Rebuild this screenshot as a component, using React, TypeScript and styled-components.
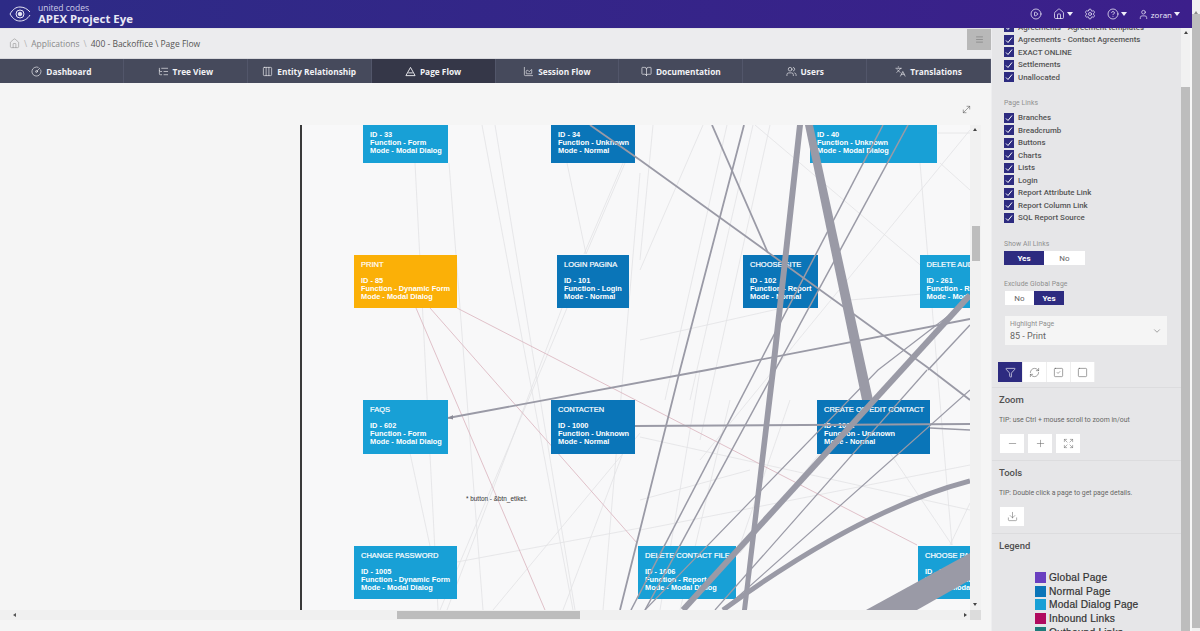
import React from "react";
import styled, { createGlobalStyle } from "styled-components";
import {
  AreaChart, BookOpen, ChevronDown, CircleGauge, CircleHelp, CirclePlay, Columns3, Download, Expand, Filter,
  Home, Languages, ListTree, Menu, Minus, MoveDiagonal, Plus, RefreshCw, Settings, Square, SquareCheck,
  User, Users,
} from "lucide-react";

const GlobalStyle = createGlobalStyle`
  html, body { margin: 0; padding: 0; height: 631px; overflow: hidden; background: #f5f5f5; }
  * { box-sizing: border-box; }
  body { font-family: "Open Sans", "Noto Sans", sans-serif; }
`;

const Page = styled.div`
  display: flex;
  width: 1200px;
  height: 631px;
  overflow: hidden;
`;

const Content = styled.div`
  display: flex;
  flex-direction: column;
  width: 1192px;
`;

const PageScrollbar = styled.div`
  width: 8px;
  display: flex;
  flex-direction: column;
  background: #f1f1f1;
  align-items: center;
  &::before {
    content: "";
    margin-top: 2px;
    height: 6px;
    border-left: 2.5px solid transparent;
    border-right: 2.5px solid transparent;
    border-bottom: 3px solid #8a8a8a;
    border-top: 3px solid transparent;
  }
  &::after {
    content: "";
    width: 100%;
    height: 614px;
    background: #bdbdbd;
  }
`;

const Header = styled.header`
  height: 28px;
  flex: none;
  display: flex;
  align-items: center;
  background: linear-gradient(90deg, #2d2b86, #3c1f8b);
  color: #fff;
  padding: 0 12px 0 9px;
`;

const Brand = styled.div`
  display: flex;
  flex-direction: column;
  margin-left: 7px;
  flex: 1;
`;

const BrandTop = styled.span`
  font-size: 8.5px;
  line-height: 9px;
  color: #cfcde8;
  margin-top: -1px;
`;

const BrandName = styled.span`
  font-size: 11.4px;
  line-height: 13px;
  font-weight: 700;
  color: #e9e8f5;
`;

const HeadActions = styled.div`
  display: flex;
  align-items: center;
  gap: 11px;
`;

const HeadAction = styled.span`
  display: flex;
  align-items: center;
  gap: 2px;
  font-size: 8px;
  color: #f0effa;
`;

const Caret = styled.i`
  width: 0;
  height: 0;
  border-left: 3px solid transparent;
  border-right: 3px solid transparent;
  border-top: 4px solid #f0effa;
`;

const Body = styled.div`
  display: flex;
  flex: 1;
  min-height: 0;
`;

const Main = styled.main`
  width: 991px;
  display: flex;
  flex-direction: column;
`;

const Crumbs = styled.div`
  height: 30px;
  flex: none;
  display: flex;
  align-items: center;
  background: #ececee;
  border-top: 1px solid #e4e4e6;
  padding-left: 9px;
  font-size: 8.5px;
  position: relative;
  color: #8a8a8a;
`;

const CrumbSep = styled.span`
  margin: 0 4px;
  color: #b5b5b5;
`;

const CrumbCurrent = styled.span`
  color: #555;
`;

const PanelToggle = styled.div`
  position: absolute;
  right: 0;
  top: 0;
  width: 24px;
  height: 21px;
  display: flex;
  align-items: center;
  justify-content: center;
  background: #b8b8b8;
  color: #8c8c8c;
`;

const Tabs = styled.nav`
  height: 25px;
  flex: none;
  display: grid;
  grid-template-columns: repeat(8, 1fr);
  background: #464a5c;
  border-top: 1px solid #d8d8dc;
`;

const Tab = styled.div<{ $active?: boolean }>`
  display: flex;
  align-items: center;
  justify-content: center;
  gap: 4px;
  color: #f2f2f5;
  font-size: 8.3px;
  font-weight: 700;
  background: ${(p) => (p.$active ? "#353748" : "transparent")};
  border-right: 1px solid #52566a;
`;

const Stage = styled.section`
  flex: 1;
  display: flex;
  flex-direction: column;
  position: relative;
  padding-top: 42px;
  background: #f5f5f5;
`;

const ExpandBtn = styled.span`
  position: absolute;
  left: 961px;
  top: 21px;
  color: #555;
  display: flex;
`;

const CanvasRow = styled.div`
  display: flex;
  height: 485px;
  padding-left: 300px;
`;

const Canvas = styled.div`
  position: relative;
  width: 670px;
  height: 485px;
  overflow: hidden;
  background: #f8f8f9;
  border-left: 2px solid #3a3a3a;
`;

const EdgeLayer = styled.svg`
  position: absolute;
  left: -2px;
  top: 0;
  width: 670px;
  height: 485px;
`;

const Node = styled.div<{ $x: number; $y: number; $w: number; $kind: "modal" | "normal" | "active" }>`
  position: absolute;
  left: ${(p) => p.$x - 302}px;
  top: ${(p) => p.$y - 125}px;
  width: ${(p) => p.$w}px;
  height: 53.5px;
  padding: 6px 0 0 7px;
  color: #fff;
  font-family: "Liberation Sans", Arial, sans-serif;
  font-weight: 700;
  font-size: 7.4px;
  line-height: 8px;
  white-space: nowrap;
  background: ${(p) => (p.$kind === "modal" ? "#18a0d6" : p.$kind === "normal" ? "#0a75b8" : "#fbb007")};
`;

const NodeTitle = styled.div`
  height: 8.5px;
  margin-bottom: 7.5px;
  font-size: 7.5px;
  font-weight: 400;
  -webkit-text-stroke: 0.2px #fff;
`;

const EdgeLabel = styled.span`
  position: absolute;
  left: 164px;
  top: 370px;
  font-family: "Liberation Sans", Arial, sans-serif;
  font-size: 6.4px;
  line-height: 8px;
  color: #333;
`;

const VBar = styled.div`
  width: 11px;
  position: relative;
  background: #f1f1f1;
`;

const VThumb = styled.div`
  position: absolute;
  left: 2px;
  top: 101px;
  width: 8px;
  height: 35px;
  background: #bdbdbd;
`;

const ArrowUp = styled.i`
  position: absolute;
  left: 3px;
  top: 3px;
  border-left: 2.5px solid transparent;
  border-right: 2.5px solid transparent;
  border-bottom: 3px solid #444;
`;

const ArrowDown = styled.i`
  position: absolute;
  left: 3px;
  bottom: 4px;
  border-left: 2.5px solid transparent;
  border-right: 2.5px solid transparent;
  border-top: 3px solid #444;
`;

const HBar = styled.div`
  height: 10px;
  width: 981px;
  position: relative;
  background: #f0f0f0;
`;

const HThumb = styled.div`
  position: absolute;
  left: 397px;
  top: 1px;
  width: 183px;
  height: 8px;
  background: #bdbdbd;
`;

const ArrowLeft = styled.i`
  position: absolute;
  left: 13px;
  top: 2.5px;
  border-top: 2.5px solid transparent;
  border-bottom: 2.5px solid transparent;
  border-right: 3px solid #555;
`;

const ArrowRight = styled.i`
  position: absolute;
  left: 964px;
  top: 2.5px;
  border-top: 2.5px solid transparent;
  border-bottom: 2.5px solid transparent;
  border-left: 3px solid #444;
`;

const HCorner = styled.div`
  position: absolute;
  left: 970px;
  top: 0;
  width: 11px;
  height: 10px;
  background: #dcdcdc;
`;

const Aside = styled.aside`
  width: 201px;
  display: flex;
  height: 603px;
  overflow: hidden;
`;

const SidePanel = styled.div`
  width: 190px;
  background: #e6e6e8;
  border-left: 1px solid #eeeef0;
  color: #505050;
  overflow: hidden;
  font-family: Roboto, "Open Sans", sans-serif;
`;

const SideBar = styled.div`
  width: 9px;
  display: flex;
  flex-direction: column;
  background: #f1f1f1;
  position: relative;
  padding-top: 59px;
  &::after {
    content: "";
    flex: 1;
    background: #bdbdbd;
  }
`;

const SideGap = styled.div`
  width: 2px;
  background: #f7f7f7;
`;

const FilterGroup = styled.div`
  padding: 0 12px;
  margin-top: -1px;
`;

const CheckList = styled.div<{ $first?: boolean }>`
  display: flex;
  flex-direction: column;
  margin-top: ${(p) => (p.$first ? "-7px" : "0")};
`;

const CheckRow = styled.label`
  display: flex;
  align-items: center;
  gap: 4px;
  height: 12.5px;
  font-size: 7.9px;
  font-weight: 500;
  color: #555;
  white-space: nowrap;
`;

const Box = styled.span`
  width: 10px;
  height: 10px;
  background: #2d2b80;
  color: #fff;
  display: flex;
  align-items: center;
  justify-content: center;
  flex: none;
`;

const GroupLabel = styled.div<{ $top: number; $bottom: number }>`
  font-size: 6.8px;
  line-height: 10px;
  letter-spacing: 0.1px;
  color: #8e8e8e;
  margin: ${(p) => p.$top}px 0 ${(p) => p.$bottom}px;
`;

const Toggle = styled.div<{ $bottom: number; $indent?: number }>`
  display: inline-flex;
  margin-left: ${(p) => p.$indent ?? 0}px;
  margin-bottom: ${(p) => p.$bottom}px;
  height: 14px;
  vertical-align: top;
`;

const ToggleItem = styled.span<{ $on?: boolean; $w: number }>`
  width: ${(p) => p.$w}px;
  display: flex;
  align-items: center;
  justify-content: center;
  font-size: 8px;
  font-weight: ${(p) => (p.$on ? 700 : 400)};
  background: ${(p) => (p.$on ? "#2d2b80" : "#fff")};
  color: ${(p) => (p.$on ? "#fff" : "#666")};
`;

const SelectBox = styled.div`
  margin-left: 1px;
  width: 162px;
  height: 29px;
  background: #f5f5f5;
  padding: 3px 5px;
  position: relative;
  color: #666;
`;

const SelectLabel = styled.div`
  font-size: 6.8px;
  line-height: 10px;
  color: #8e8e8e;
`;

const SelectValue = styled.div`
  font-size: 9px;
  line-height: 14px;
`;

const SelectArrow = styled.span`
  position: absolute;
  right: 5px;
  top: 10px;
  display: flex;
`;

const ToolGroup = styled.div`
  display: flex;
  margin: 17px 0 5px 6px;
  width: 97px;
  height: 20px;
`;

const ToolItem = styled.span<{ $on?: boolean }>`
  flex: ${(p) => (p.$on ? "0 0 25px" : "1")};
  display: flex;
  align-items: center;
  justify-content: center;
  background: ${(p) => (p.$on ? "#2d2b80" : "#fff")};
  color: ${(p) => (p.$on ? "#fff" : "#555")};
  border-right: 1px solid #eee;
`;

const Section = styled.section`
  border-top: 1px solid #dcdcde;
  padding: 6px 8px 0 7px;
`;

const SectionTitle = styled.h4`
  margin: 0;
  font-size: 9.5px;
  line-height: 12px;
  font-weight: 500;
  color: #505050;
`;

const Tip = styled.p`
  margin: 9px 0 9px;
  font-size: 6.9px;
  line-height: 10px;
  color: #666;
  white-space: nowrap;
`;

const IconRow = styled.div`
  display: flex;
  gap: 4px;
  margin-bottom: 7px;
  margin-left: 1px;
`;

const IconBtn = styled.span`
  width: 24px;
  height: 19px;
  background: #fff;
  color: #666;
  display: flex;
  align-items: center;
  justify-content: center;
`;

const Legend = styled.ul`
  list-style: none;
  margin: 18.500px 0 0;
  padding: 0 0 0 36px;
`;

const LegendItem = styled.li`
  display: flex;
  align-items: center;
  gap: 3px;
  height: 13.8px;
  font-family: "Liberation Sans", Arial, sans-serif;
  font-size: 10.2px;
  letter-spacing: 0.2px;
  -webkit-text-stroke: 0.2px #333;
  color: #333;
  white-space: nowrap;
`;

const Swatch = styled.i<{ $color: string }>`
  width: 11px;
  height: 11px;
  background: ${(p) => p.$color};
  flex: none;
`;

function PageFlowIcon({ size }: { size: number; strokeWidth?: number }) {
  return (
    <svg width={size} height={size} viewBox="0 0 12 12" fill="none" stroke="currentColor" strokeWidth="1">
      <path d="M6 1.500L11 10.500H1z" />
      <path d="M3.500 7.500h5" />
    </svg>
  );
}

const TABS = [
  { label: "Dashboard", icon: CircleGauge },
  { label: "Tree View", icon: ListTree },
  { label: "Entity Relationship", icon: Columns3 },
  { label: "Page Flow", icon: PageFlowIcon, active: true },
  { label: "Session Flow", icon: AreaChart },
  { label: "Documentation", icon: BookOpen },
  { label: "Users", icon: Users },
  { label: "Translations", icon: Languages },
];

type NodeData = {
  x: number; y: number; w: number; kind: "modal" | "normal" | "active";
  title?: string; id: string; fn: string; mode: string;
};

const NODES: NodeData[] = [
  { x: 363, y: 109, w: 85, kind: "modal", id: "33", fn: "Form", mode: "Modal Dialog" },
  { x: 551, y: 109, w: 84, kind: "normal", id: "34", fn: "Unknown", mode: "Normal" },
  { x: 810, y: 109, w: 127, kind: "modal", id: "40", fn: "Unknown", mode: "Modal Dialog" },
  { x: 354, y: 254.5, w: 103, kind: "active", title: "PRINT", id: "85", fn: "Dynamic Form", mode: "Modal Dialog" },
  { x: 557, y: 254.5, w: 72, kind: "normal", title: "LOGIN PAGINA", id: "101", fn: "Login", mode: "Normal" },
  { x: 743, y: 254.5, w: 75, kind: "normal", title: "CHOOSE SITE", id: "102", fn: "Report", mode: "Normal" },
  { x: 919.5, y: 254.5, w: 90, kind: "modal", title: "DELETE AUDIT", id: "261", fn: "Report", mode: "Modal Dialog" },
  { x: 363, y: 400, w: 85, kind: "modal", title: "FAQS", id: "602", fn: "Form", mode: "Modal Dialog" },
  { x: 551, y: 400, w: 84, kind: "normal", title: "CONTACTEN", id: "1000", fn: "Unknown", mode: "Normal" },
  { x: 817, y: 400, w: 113, kind: "normal", title: "CREATE OR EDIT CONTACT", id: "1001", fn: "Unknown", mode: "Normal" },
  { x: 354, y: 545.5, w: 103, kind: "modal", title: "CHANGE PASSWORD", id: "1005", fn: "Dynamic Form", mode: "Modal Dialog" },
  { x: 638, y: 545.5, w: 98, kind: "modal", title: "DELETE CONTACT FILE", id: "1006", fn: "Report", mode: "Modal Dialog" },
  { x: 918, y: 545.5, w: 90, kind: "modal", title: "CHOOSE PAGE", id: "1007", fn: "Report", mode: "Modal Dialog" },
];

// x1 y1 x2 y2, page coordinates
const LIGHT = [
  [415, 163, 438, 610], [449, 163, 483, 610], [482, 125, 573, 610], [495, 125, 575, 610],
  [567, 163, 586, 254], [625, 163, 586, 254], [623, 163, 584, 254], [640, 173, 603, 610],
  [567, 308, 440, 610], [562, 308, 447, 610], [410, 453, 430, 546], [640, 528, 457, 562],
  [640, 433, 493, 610], [623, 453, 563, 610], [653, 125, 640, 260], [703, 125, 640, 270],
  [727, 125, 665, 400], [753, 125, 690, 400], [770, 125, 700, 440], [755, 125, 970, 307],
  [970, 130, 700, 460], [920, 163, 952, 545], [940, 163, 970, 190], [938, 133, 970, 133],
  [640, 437, 970, 510], [640, 530, 970, 465], [890, 453, 952, 545], [970, 503, 950, 545],
  [740, 553, 820, 453], [700, 370, 660, 610], [730, 400, 680, 610], [790, 400, 740, 545],
  [850, 300, 970, 290], [640, 340, 818, 300], [640, 500, 750, 470],
];

const PINK = [
  [416, 308, 545, 610], [430, 308, 637, 543], [457, 308, 917, 545],
];

const HEAVY: { d: string; w: number }[] = [
  { d: "M590 125L640 160L927 367L970 400", w: 1.8 },
  { d: "M712 125L768 253", w: 1.8 },
  { d: "M744 125L680 370L620 610", w: 1.8 },
  { d: "M908 125L645 610", w: 1.5 },
  { d: "M883 125L631 610", w: 1.5 },
  { d: "M448 418L707 370L970 319", w: 1.8 },
  { d: "M635 426L970 424", w: 2 },
  { d: "M930 428L970 430", w: 1.5 },
  { d: "M927 370L715 610", w: 1.2 },
  { d: "M970 390L723 610", w: 1.2 },
  { d: "M960 307L878 370L645 610", w: 1.2 },
  { d: "M970 325L928 370", w: 1.5 },
  { d: "M970 295L683 610", w: 6 },
  { d: "M970 481Q860 510 723 610", w: 5 },
];

const BANDS = [
  "M805 125L813 125L873 400L862 400Z",
  "M797 125L803 125L776 370L747 610L742 610L770 370Z",
  "M970 553L970 580L917 610L866 610Z",
];

function EyeLogo() {
  return (
    <svg width="22" height="16" viewBox="0 0 22 16" fill="none" stroke="#e8e7f5" strokeWidth="1">
      <path d="M1 8C4 3 7 1 11 1s7.500 2 10 5M21 9c-2.500 4-6 6-10 6S4 13 1 8" />
      <circle cx="11" cy="8" r="4" />
      <circle cx="11" cy="8" r="1.800" fill="#e8e7f5" />
    </svg>
  );
}

function Check() {
  return (
    <svg width="8" height="8" viewBox="0 0 8 8" fill="none" stroke="#fff" strokeWidth="1">
      <path d="M1 4.500L3 6.500L7 1.500" />
    </svg>
  );
}

const CHECKS_TOP = ["Agreements - Agreement templates", "Agreements - Contact Agreements", "EXACT ONLINE", "Settlements", "Unallocated"];
const CHECKS_LINKS = ["Branches", "Breadcrumb", "Buttons", "Charts", "Lists", "Login", "Report Attribute Link", "Report Column Link", "SQL Report Source"];
const LEGEND = [
  { label: "Global Page", color: "#6a3fc0" },
  { label: "Normal Page", color: "#0a75b8" },
  { label: "Modal Dialog Page", color: "#18a0d6" },
  { label: "Inbound Links", color: "#b00a5e" },
  { label: "Outbound Links", color: "#1f7a7a" },
];

export default function App() {
  return (
    <Page>
      <GlobalStyle />
      <Content>
        <Header>
          <EyeLogo />
          <Brand>
            <BrandTop>united codes</BrandTop>
            <BrandName>APEX Project Eye</BrandName>
          </Brand>
          <HeadActions>
            <HeadAction><CirclePlay size={12} strokeWidth={1.5} /></HeadAction>
            <HeadAction><Home size={12} strokeWidth={1.5} /><Caret /></HeadAction>
            <HeadAction><Settings size={12} strokeWidth={1.5} /></HeadAction>
            <HeadAction><CircleHelp size={12} strokeWidth={1.5} /><Caret /></HeadAction>
            <HeadAction><User size={11} strokeWidth={1.5} /> zoran <Caret /></HeadAction>
          </HeadActions>
        </Header>
        <Body>
          <Main>
            <Crumbs>
              <Home size={11} strokeWidth={1.2} />
              <CrumbSep>\</CrumbSep>
              Applications
              <CrumbSep>\</CrumbSep>
              <CrumbCurrent>400 - Backoffice \ Page Flow</CrumbCurrent>
              <PanelToggle><Menu size={9} strokeWidth={2.4} /></PanelToggle>
            </Crumbs>
            <Tabs>
              {TABS.map((t) => (
                <Tab key={t.label} $active={t.active}>
                  <t.icon size={11} strokeWidth={1.4} />
                  {t.label}
                </Tab>
              ))}
            </Tabs>
            <Stage>
              <ExpandBtn><MoveDiagonal size={11} strokeWidth={1.2} /></ExpandBtn>
              <CanvasRow>
                <Canvas>
                  <EdgeLayer viewBox="300 125 670 485">
                    {LIGHT.map((l, i) => (
                      <line key={i} x1={l[0]} y1={l[1]} x2={l[2]} y2={l[3]} stroke="#e2e2e4" strokeWidth="0.8" />
                    ))}
                    {PINK.map((l, i) => (
                      <line key={i} x1={l[0]} y1={l[1]} x2={l[2]} y2={l[3]} stroke="#d9b3bd" strokeWidth="0.8" />
                    ))}
                  </EdgeLayer>
                  {NODES.map((n) => (
                    <Node key={n.id} $x={n.x} $y={n.y} $w={n.w} $kind={n.kind}>
                      <NodeTitle>{n.title}</NodeTitle>
                      <div>ID - {n.id}</div>
                      <div>Function - {n.fn}</div>
                      <div>Mode - {n.mode}</div>
                    </Node>
                  ))}
                  <EdgeLayer viewBox="300 125 670 485">
                    {HEAVY.map((e, i) => (
                      <path key={i} d={e.d} fill="none" stroke="#9a9aa6" strokeWidth={e.w} />
                    ))}
                    {BANDS.map((d, i) => (
                      <path key={i} d={d} fill="#9a9aa6" />
                    ))}
                    <path d="M448 418l5-3v4.500z" fill="#8a8a96" />
                  </EdgeLayer>
                  <EdgeLabel>* button - &amp;btn_etiket.</EdgeLabel>
                </Canvas>
                <VBar>
                  <ArrowUp />
                  <VThumb />
                  <ArrowDown />
                </VBar>
              </CanvasRow>
              <HBar>
                <ArrowLeft />
                <HThumb />
                <ArrowRight />
                <HCorner />
              </HBar>
            </Stage>
          </Main>
          <Aside>
            <SidePanel>
              <FilterGroup>
                <CheckList $first>
                  {CHECKS_TOP.map((c) => (
                    <CheckRow key={c}><Box><Check /></Box>{c}</CheckRow>
                  ))}
                </CheckList>
                <GroupLabel $top={14} $bottom={4}>Page Links</GroupLabel>
                <CheckList>
                  {CHECKS_LINKS.map((c) => (
                    <CheckRow key={c}><Box><Check /></Box>{c}</CheckRow>
                  ))}
                </CheckList>
                <GroupLabel $top={15} $bottom={2}>Show All Links</GroupLabel>
                <Toggle $bottom={14}>
                  <ToggleItem $on $w={40}>Yes</ToggleItem>
                  <ToggleItem $w={41}>No</ToggleItem>
                </Toggle>
                <GroupLabel $top={0} $bottom={2}>Exclude Global Page</GroupLabel>
                <Toggle $bottom={11} $indent={1}>
                  <ToggleItem $w={29}>No</ToggleItem>
                  <ToggleItem $on $w={30}>Yes</ToggleItem>
                </Toggle>
                <SelectBox>
                  <SelectLabel>Highlight Page</SelectLabel>
                  <SelectValue>85 - Print</SelectValue>
                  <SelectArrow><ChevronDown size={10} strokeWidth={1.4} /></SelectArrow>
                </SelectBox>
              </FilterGroup>
              <ToolGroup>
                <ToolItem $on><Filter size={11} strokeWidth={1.4} /></ToolItem>
                <ToolItem><RefreshCw size={11} strokeWidth={1.2} /></ToolItem>
                <ToolItem><SquareCheck size={11} strokeWidth={1.2} /></ToolItem>
                <ToolItem><Square size={11} strokeWidth={1.2} /></ToolItem>
              </ToolGroup>
              <Section>
                <SectionTitle>Zoom</SectionTitle>
                <Tip>TIP: use Ctrl + mouse scroll to zoom in/out</Tip>
                <IconRow>
                  <IconBtn><Minus size={11} strokeWidth={1.2} /></IconBtn>
                  <IconBtn><Plus size={11} strokeWidth={1.2} /></IconBtn>
                  <IconBtn><Expand size={11} strokeWidth={1.1} /></IconBtn>
                </IconRow>
              </Section>
              <Section>
                <SectionTitle>Tools</SectionTitle>
                <Tip>TIP: Double click a page to get page details.</Tip>
                <IconRow>
                  <IconBtn><Download size={11} strokeWidth={1.2} /></IconBtn>
                </IconRow>
              </Section>
              <Section>
                <SectionTitle>Legend</SectionTitle>
                <Legend>
                  {LEGEND.map((l) => (
                    <LegendItem key={l.label}><Swatch $color={l.color} />{l.label}</LegendItem>
                  ))}
                </Legend>
              </Section>
            </SidePanel>
            <SideBar><ArrowUp /></SideBar>
            <SideGap />
          </Aside>
        </Body>
      </Content>
      <PageScrollbar />
    </Page>
  );
}
